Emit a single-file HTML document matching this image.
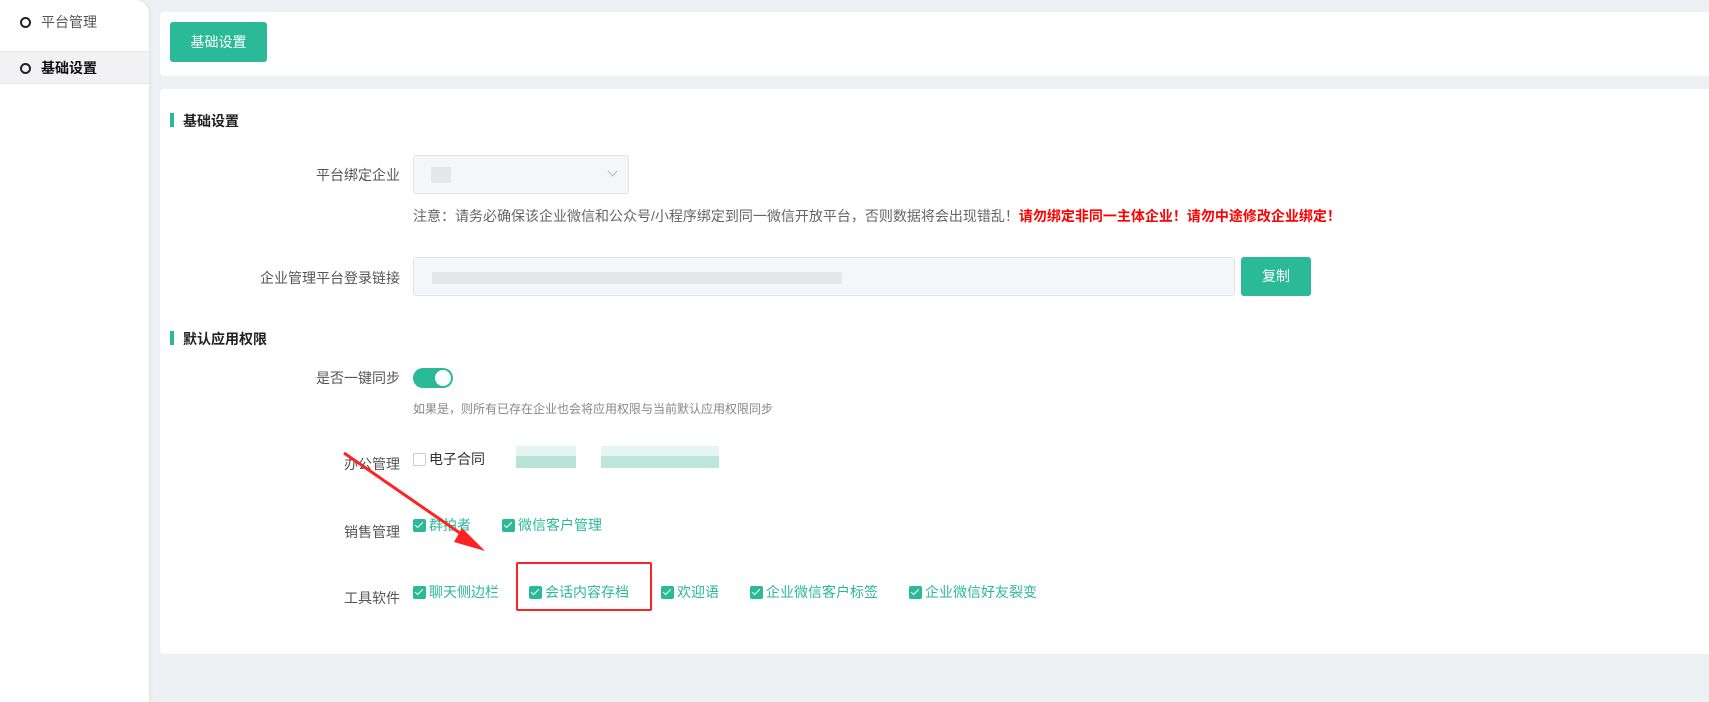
<!DOCTYPE html>
<html><head><meta charset="utf-8"><style>
*{box-sizing:border-box;margin:0;padding:0}
body{width:1709px;height:702px;background:#eef1f4;font-family:"Liberation Sans","Noto Sans CJK SC",sans-serif;font-size:14px;color:#555;position:relative;overflow:hidden}
.a{position:absolute;white-space:nowrap}
.side{left:0;top:0;width:149px;height:702px;background:#fff;border-radius:0 14px 0 0;box-shadow:2px 0 4px rgba(0,0,0,.05)}
.circ{display:inline-block;width:11px;height:11px;border:2px solid #222;border-radius:50%;vertical-align:-1px;margin-right:10px}
.card{background:#fff;border-radius:4px}
.btn{background:#2bba98;color:#fff;border-radius:3px;text-align:center}
.lbl{text-align:right;width:200px;color:#555}
.bar{width:4px;height:14px;background:#2bba98}
.cb{display:inline-block;width:13px;height:13px;background:#2bba98;border-radius:2px;vertical-align:-2px;margin-right:3px;position:relative}
.cb:after{content:"";position:absolute;left:4px;top:1px;width:3px;height:7px;border:solid #fff;border-width:0 1.5px 1.5px 0;transform:rotate(45deg)}
.g{color:#2bba98}
</style></head><body>
<div class="a side">
 <div class="a" style="left:20px;top:12px;color:#555;font-size:14px"><span class="circ"></span>平台管理</div>
 <div class="a" style="left:0;top:51px;width:149px;height:33px;background:#f2f2f4;border-top:1px solid #e8e8ec;border-bottom:1px solid #e8e8ec"></div>
 <div class="a" style="left:20px;top:58px;color:#111;font-weight:bold;font-size:14px"><span class="circ"></span>基础设置</div>
</div>
<div class="a card" style="left:160px;top:12px;width:1560px;height:64px"></div>
<div class="a btn" style="left:170px;top:22px;width:97px;height:40px;line-height:40px;font-size:14px">基础设置</div>
<div class="a card" style="left:160px;top:89px;width:1560px;height:565px"></div>
<div class="a bar" style="left:170px;top:113px"></div>
<div class="a" style="left:183px;top:111px;font-weight:bold;color:#222;font-size:14px">基础设置</div>
<div class="a lbl" style="left:200px;top:165px">平台绑定企业</div>
<div class="a" style="left:413px;top:155px;width:216px;height:39px;background:#f5f6f9;border:1px solid #e2e3e8;border-radius:3px"><div class="a" style="left:17px;top:11px;width:20px;height:16px;background:#e6e7ea"></div><div class="a" style="right:12px;top:12px;width:7px;height:7px;border:solid #bbb;border-width:0 1px 1px 0;transform:rotate(45deg)"></div></div>
<div class="a" style="left:413px;top:206px;color:#666">注意：请务必确保该企业微信和公众号/小程序绑定到同一微信开放平台，否则数据将会出现错乱！<b style="color:#f00">请勿绑定非同一主体企业！请勿中途修改企业绑定！</b></div>
<div class="a lbl" style="left:200px;top:268px">企业管理平台登录链接</div>
<div class="a" style="left:413px;top:257px;width:822px;height:39px;background:#f5f6f9;border:1px solid #e2e3e8;border-radius:3px"><div class="a" style="left:18px;top:14px;width:410px;height:12px;background:#e6e7eb"></div></div>
<div class="a btn" style="left:1241px;top:257px;width:70px;height:39px;line-height:39px">复制</div>
<div class="a bar" style="left:170px;top:331px"></div>
<div class="a" style="left:183px;top:329px;font-weight:bold;color:#222">默认应用权限</div>
<div class="a lbl" style="left:200px;top:368px">是否一键同步</div>
<div class="a" style="left:413px;top:368px;width:40px;height:20px;background:#2bba98;border-radius:10px"><div class="a" style="right:2px;top:2px;width:16px;height:16px;background:#fff;border-radius:50%"></div></div>
<div class="a" style="left:413px;top:400px;font-size:12px;color:#888">如果是，则所有已存在企业也会将应用权限与当前默认应用权限同步</div>
<div class="a lbl" style="left:200px;top:454px">办公管理</div>
<div class="a" style="left:413px;top:449px;color:#333"><span class="cb" style="background:#fff;border:1px solid #ccc"></span>电子合同</div>
<div class="a" style="left:516px;top:446px;width:60px;height:22px;background:linear-gradient(#e4f4ef 45%,#b8e3d6 45%)"></div>
<div class="a" style="left:601px;top:446px;width:118px;height:22px;background:linear-gradient(#e6f5f0 45%,#bfe6da 45%)"></div>
<div class="a lbl" style="left:200px;top:522px">销售管理</div>
<div class="a g" style="left:413px;top:515px"><span class="cb"></span>群拍者</div>
<div class="a g" style="left:502px;top:515px"><span class="cb"></span>微信客户管理</div>
<div class="a lbl" style="left:200px;top:588px">工具软件</div>
<div class="a g" style="left:413px;top:582px"><span class="cb"></span>聊天侧边栏</div>
<div class="a g" style="left:529px;top:582px"><span class="cb"></span>会话内容存档</div>
<div class="a g" style="left:661px;top:582px"><span class="cb"></span>欢迎语</div>
<div class="a g" style="left:750px;top:582px"><span class="cb"></span>企业微信客户标签</div>
<div class="a g" style="left:909px;top:582px"><span class="cb"></span>企业微信好友裂变</div>
<div class="a" style="left:516px;top:562px;width:136px;height:49px;border:2px solid #f22;border-radius:2px"></div>
<svg class="a" style="left:0;top:0" width="1709" height="702"><line x1="344" y1="453" x2="470" y2="540" stroke="#f22" stroke-width="3"/><polygon points="462,528 485,551 454,542" fill="#f22"/></svg>
</body></html>
